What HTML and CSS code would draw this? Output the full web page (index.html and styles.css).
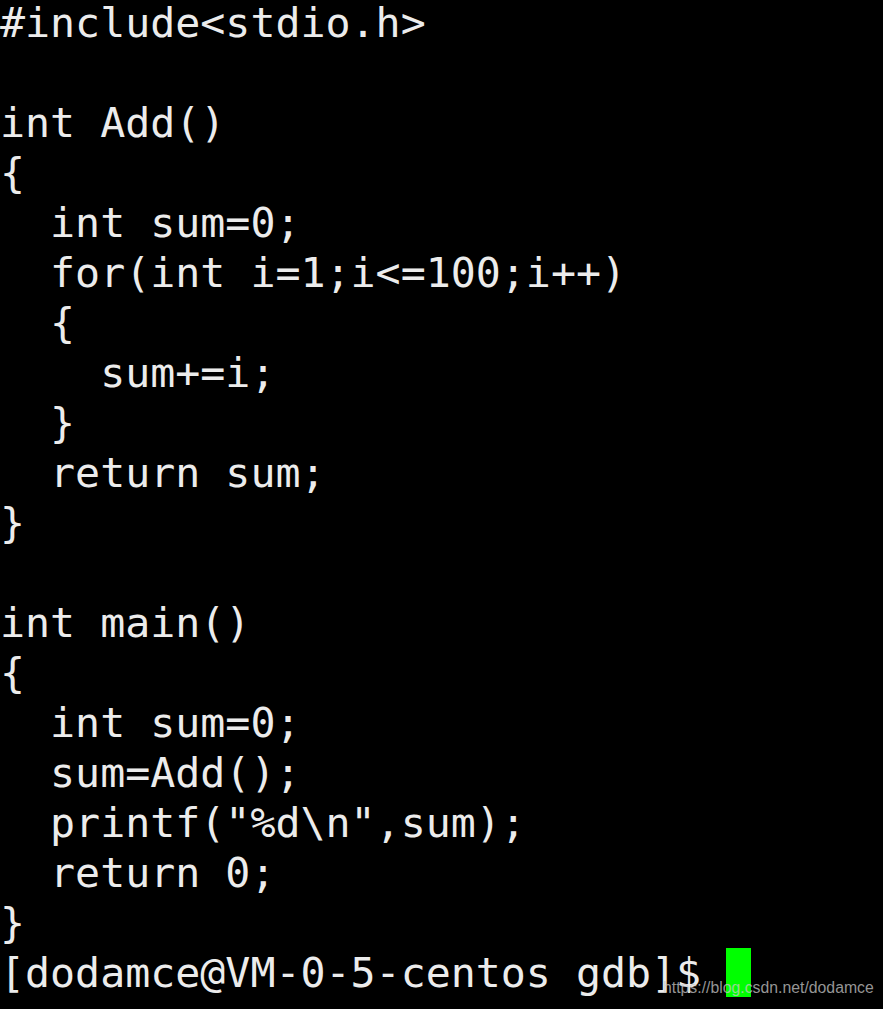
FILE: index.html
```html
<!DOCTYPE html>
<html>
<head>
<meta charset="utf-8">
<link rel="stylesheet" href="styles.css">
</head>
<body>
<div class="term">
<pre class="code">#include&lt;stdio.h&gt;

int Add()
{
  int sum=0;
  for(int i=1;i&lt;=100;i++)
  {
    sum+=i;
  }
  return sum;
}

int main()
{
  int sum=0;
  sum=Add();
  printf("%d\n",sum);
  return 0;
}
[dodamce@VM-0-5-centos gdb]$ <span class="cursor"></span></pre>
<div class="watermark">https://blog.csdn.net/dodamce</div>
</div>
</body>
</html>
```
FILE: styles.css
```css
html, body {
  margin: 0;
  padding: 0;
  background: #000;
}
.term {
  position: relative;
  width: 883px;
  height: 1009px;
  overflow: hidden;
  background: #000;
}
.code {
  margin: -2px 0 0 0;
  padding: 0;
  font-family: "DejaVu Sans Mono", monospace;
  font-size: 41.6px;
  line-height: 50px;
  color: #ececec;
  white-space: pre;
}
.cursor {
  display: inline-block;
  width: 25px;
  height: 49px;
  background: #00ff00;
  vertical-align: top;
}
.watermark {
  position: absolute;
  left: 663px;
  top: 978px;
  font-family: "Liberation Sans", Arial, sans-serif;
  font-size: 15.8px;
  line-height: 20px;
  color: rgba(200, 200, 200, 0.75);
  white-space: nowrap;
}
```
